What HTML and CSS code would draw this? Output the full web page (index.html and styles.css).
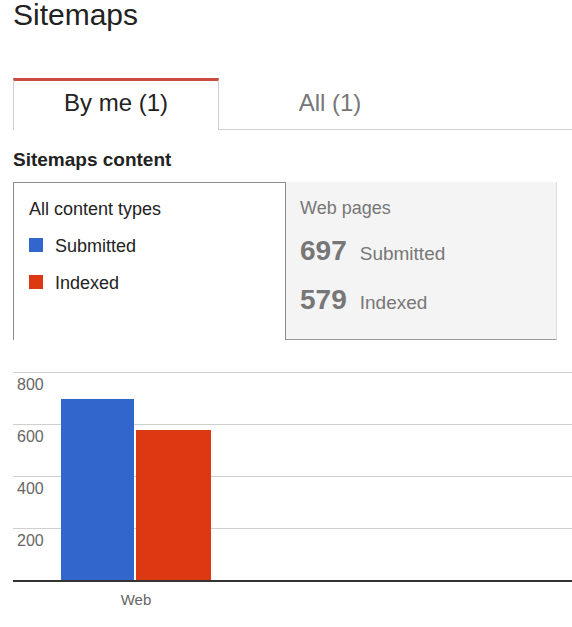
FILE: index.html
```html
<!DOCTYPE html>
<html>
<head>
<meta charset="utf-8">
<link rel="stylesheet" href="styles.css">
</head>
<body>
<div class="page">
  <h1 class="title">Sitemaps</h1>
  <div class="tabs">
    <div class="tab tab-active">By me (1)</div>
    <div class="tab tab-inactive">All (1)</div>
    <div class="tab-fill"></div>
  </div>
  <div class="section-heading">Sitemaps content</div>
  <div class="boxes">
    <div class="box-left">
      <div class="line">All content types</div>
      <div class="line"><span class="swatch swatch-blue"></span>Submitted</div>
      <div class="line"><span class="swatch swatch-red"></span>Indexed</div>
    </div>
    <div class="box-right">
      <div class="line">Web pages</div>
      <div class="num-line"><span class="num">697</span><span class="num-label">Submitted</span></div>
      <div class="num-line"><span class="num">579</span><span class="num-label">Indexed</span></div>
    </div>
  </div>
  <div class="chart">
    <div class="plot">
      <div class="grid-row"><span class="ylabel">800</span></div>
      <div class="grid-row"><span class="ylabel">600</span></div>
      <div class="grid-row"><span class="ylabel">400</span></div>
      <div class="grid-row"><span class="ylabel">200</span></div>
      <div class="bars">
        <div class="bar bar-blue" style="height:181px"></div>
        <div class="bar bar-red" style="height:150px"></div>
      </div>
    </div>
    <div class="axis"></div>
    <div class="xlabel">Web</div>
  </div>
</div>
</body>
</html>
```
FILE: styles.css
```css
html, body {
  margin: 0;
  padding: 0;
  background: #fff;
}
body {
  font-family: "Liberation Sans", Arial, sans-serif;
  color: #222;
  overflow: hidden;
}
.page {
  width: 559px;
  padding-left: 13px;
}
.title {
  margin: 0;
  font-size: 30px;
  line-height: 30px;
  font-weight: normal;
  color: #222;
}
.tabs {
  display: flex;
  margin-top: 48px;
  height: 52px;
}
.tab {
  box-sizing: border-box;
  height: 52px;
  font-size: 24px;
  line-height: 44px;
  text-align: center;
}
.tab-active {
  width: 206px;
  border-top: 3px solid #cc4b3e;
  border-left: 1px solid #cfcfcf;
  border-right: 1px solid #cfcfcf;
  color: #222;
}
.tab-inactive {
  width: 222px;
  border-top: 3px solid transparent;
  border-bottom: 1px solid #cfcfcf;
  color: #777;
}
.tab-fill {
  flex: 1;
  box-sizing: border-box;
  height: 52px;
  border-bottom: 1px solid #cfcfcf;
}
.section-heading {
  margin-top: 19px;
  font-size: 19px;
  font-weight: bold;
  line-height: 22px;
  color: #222;
}
.boxes {
  display: flex;
  margin-top: 11px;
  height: 158px;
}
.box-left {
  box-sizing: border-box;
  width: 273px;
  height: 158px;
  border: 1px solid #8c8c8c;
  border-bottom: none;
  padding: 8px 0 0 15px;
  font-size: 18px;
  color: #222;
}
.line {
  line-height: 37px;
  white-space: nowrap;
}
.swatch {
  display: inline-block;
  width: 14px;
  height: 14px;
  margin-right: 12px;
}
.swatch-blue { background: #3366cc; }
.swatch-red { background: #dc3912; }
.box-right {
  box-sizing: border-box;
  width: 271px;
  height: 158px;
  background: #f4f4f4;
  border-bottom: 1px solid #999;
  border-right: 1px solid #dcdcdc;
  padding: 8px 0 0 14px;
  font-size: 18px;
  color: #777;
}
.box-right .line {
  line-height: 36px;
}
.num-line {
  height: 49px;
  line-height: 49px;
  font-size: 28px;
  white-space: nowrap;
  overflow: hidden;
}
.num {
  font-weight: bold;
  color: #777;
  margin-right: 13px;
}
.num-label {
  font-size: 19px;
  line-height: 20px;
}
.chart {
  margin-top: 32px;
}
.plot {
  position: relative;
}
.grid-row {
  box-sizing: border-box;
  height: 52px;
  border-top: 1px solid #cfcfcf;
  padding: 2px 0 0 4px;
  font-size: 16px;
  line-height: 20px;
  color: #666;
}
.axis {
  height: 2px;
  background: #333;
}
.bars {
  position: absolute;
  left: 48px;
  bottom: 0;
  display: flex;
  align-items: flex-end;
  gap: 2px;
}
.bar-blue {
  width: 73px;
  background: #3366cc;
}
.bar-red {
  width: 75px;
  background: #dc3912;
}
.xlabel {
  width: 150px;
  margin-left: 48px;
  margin-top: 9px;
  text-align: center;
  font-size: 15px;
  line-height: 18px;
  color: #666;
}
```
